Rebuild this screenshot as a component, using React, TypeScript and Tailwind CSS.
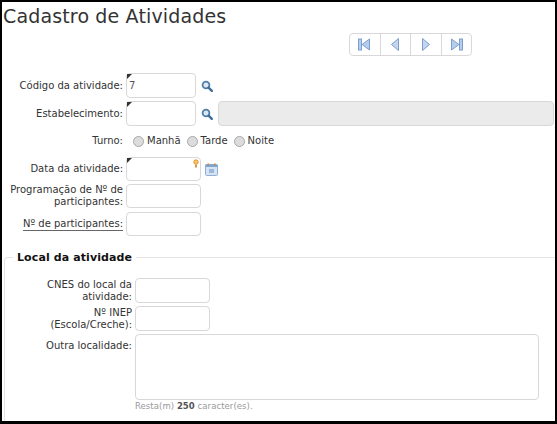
import { useState } from 'react';

const sans = "font-['DejaVu_Sans',sans-serif]";
const box = 'block rounded-[4px] border border-[#d8d8d8] outline-none';

function Corner() {
  return <span className="absolute left-[1px] top-[1px] h-0 w-0 border-r-[5px] border-t-[5px] border-r-transparent border-t-[#333]" />;
}

function SearchIcon() {
  return (
    <svg width="12" height="12" viewBox="0 0 12 12" className="block">
      <circle cx="5" cy="5" r="3.4" fill="#dbe7f2" stroke="#4f7ea8" strokeWidth="1.8" />
      <path d="M7.6 7.6 L10.8 10.8" stroke="#3f6f99" strokeWidth="2.4" strokeLinecap="round" />
    </svg>
  );
}

function NavIcon({ kind }: { kind: 'first' | 'prev' | 'next' | 'last' }) {
  const paths = {
    first: <><rect x="1.5" y="2" width="3" height="11" fill="#b5cdea" stroke="#7c9fd0" /><path d="M12.5 2 V13 L5 7.5 Z" fill="#b5cdea" stroke="#7c9fd0" /></>,
    prev: <path d="M10.5 1.5 V13.5 L3.5 7.5 Z" fill="#c3d6ee" stroke="#7c9fd0" />,
    next: <path d="M4.5 1.5 V13.5 L11.5 7.5 Z" fill="#c3d6ee" stroke="#7c9fd0" />,
    last: <><path d="M2.5 2 V13 L10 7.5 Z" fill="#b5cdea" stroke="#7c9fd0" /><rect x="10.5" y="2" width="3" height="11" fill="#b5cdea" stroke="#7c9fd0" /></>,
  };
  return <svg width="15" height="15" viewBox="0 0 15 15" className="block">{paths[kind]}</svg>;
}

function Label({ children, w = 'w-[121px]', className = '' }: { children: React.ReactNode; w?: string; className?: string }) {
  return <div className={`${w} shrink-0 text-right text-[10px] leading-[12px] text-[#333] ${className}`}>{children}</div>;
}

function Radio({ label }: { label: string }) {
  return (
    <label className="flex items-center gap-[3px]">
      <span className="h-[11px] w-[11px] rounded-full border border-[#a8a8a8] bg-[#dcdcdc]" />
      <span className="text-[10px] leading-[12px] text-[#333]">{label}</span>
    </label>
  );
}

export default function App() {
  const [codigo, setCodigo] = useState('7');
  const nav: ('first' | 'prev' | 'next' | 'last')[] = ['first', 'prev', 'next', 'last'];

  return (
    <div className={`${sans} h-[424px] w-[557px] overflow-hidden border-b-[3px] border-l-[2px] border-r-[2px] border-t-[2px] border-black bg-white`}>
      <h1 className="pl-[1px] pt-[2px] text-[19px] font-normal leading-[24px] tracking-[0.15px] text-[#333]">Cadastro de Atividades</h1>

      <div className="ml-[347px] mt-[5px] flex h-[23px] w-[123px] rounded-[4px] border border-[#d8d8d8]">
        {nav.map((n, i) => (
          <div key={n} className={`flex flex-1 items-center justify-center ${i > 0 ? 'border-l border-[#d8d8d8]' : ''}`}>
            <NavIcon kind={n} />
          </div>
        ))}
      </div>

      <div className="mt-[17px] flex flex-col">
        <div className="flex items-center gap-[3px]">
          <Label>Código da atividade:</Label>
          <div className="relative">
            <Corner />
            <input value={codigo} onChange={(e) => setCodigo(e.target.value)} className={`${box} h-[25px] w-[70px] bg-white px-[2px] text-[10px] text-[#555]`} />
          </div>
          <span className="ml-[2px]"><SearchIcon /></span>
        </div>

        <div className="mt-[3px] flex items-center gap-[3px]">
          <Label>Estabelecimento:</Label>
          <div className="relative">
            <Corner />
            <input className={`${box} h-[25px] w-[70px] bg-white`} />
          </div>
          <span className="ml-[2px]"><SearchIcon /></span>
          <input disabled className={`${box} ml-[2px] h-[25px] w-[336px] bg-[#ebebeb]`} />
        </div>

        <div className="mt-[8px] flex h-[14px] items-center gap-[3px]">
          <Label>Turno:</Label>
          <div className="ml-[7px] flex items-center gap-[6px]">
            <Radio label="Manhã" />
            <Radio label="Tarde" />
            <Radio label="Noite" />
          </div>
        </div>

        <div className="mt-[9px] flex items-center gap-[3px]">
          <Label>Data da atividade:</Label>
          <div className="relative">
            <Corner />
            <input className={`${box} h-[24px] w-[75px] bg-white`} />
            <svg width="6" height="9" viewBox="0 0 6 9" className="absolute right-[2px] top-[2px]">
              <circle cx="3" cy="3" r="2.2" fill="#f6c26b" stroke="#e8962e" />
              <rect x="2" y="5.5" width="2" height="3" fill="#d59a4a" />
            </svg>
          </div>
          <svg width="13" height="13" viewBox="0 0 13 13" className="ml-[1px]">
            <rect x="0.5" y="1.5" width="12" height="11" rx="1" fill="#d5e3f3" stroke="#8fb0d4" />
            <rect x="0.5" y="1.5" width="12" height="2.5" fill="#7fa6d0" />
            <rect x="4" y="6" width="5" height="4" fill="#9db9d8" />
            <rect x="2.5" y="0.5" width="1.5" height="2" fill="#c9872e" />
            <rect x="9" y="0.5" width="1.5" height="2" fill="#c9872e" />
          </svg>
        </div>

        <div className="mt-[3px] flex items-center gap-[3px]">
          <Label>Programação de Nº de participantes:</Label>
          <input className={`${box} h-[24px] w-[75px] bg-white`} />
        </div>

        <div className="mt-[4px] flex items-center gap-[3px]">
          <Label><span className="border-b border-[#666] pb-[1px]">Nº de participantes:</span></Label>
          <input className={`${box} h-[24px] w-[75px] bg-white`} />
        </div>
      </div>

      <fieldset className="ml-[2px] mr-[-2px] mt-[14px] h-[180px] rounded-tl-[4px] border-l border-t border-[#e4e4e4]">
        <legend className="ml-[8px] px-[4px] text-[11px] font-bold leading-[15px] tracking-[0.1px] text-[#111]">Local da atividade</legend>
        <div className="mt-[13px] flex flex-col">
          <div className="flex items-center gap-[3px]">
            <Label w="w-[127px]">CNES do local da atividade:</Label>
            <input className={`${box} h-[25px] w-[75px] bg-white`} />
          </div>
          <div className="mt-[3px] flex items-center gap-[3px]">
            <Label w="w-[127px]">Nº INEP<br />(Escola/Creche):</Label>
            <input className={`${box} h-[25px] w-[75px] bg-white`} />
          </div>
          <div className="mt-[3px] flex items-start gap-[3px]">
            <Label w="w-[127px]" className="pt-[6px]">Outra localidade:</Label>
            <div>
              <textarea className={`${box} h-[66px] w-[404px] resize-none bg-white`} />
              <p className="mt-[1px] text-[8.5px] leading-[11px] tracking-[0.06px] text-[#999]">Resta(m) <b className="text-[#555]">250</b> caracter(es).</p>
            </div>
          </div>
        </div>
      </fieldset>
    </div>
  );
}
